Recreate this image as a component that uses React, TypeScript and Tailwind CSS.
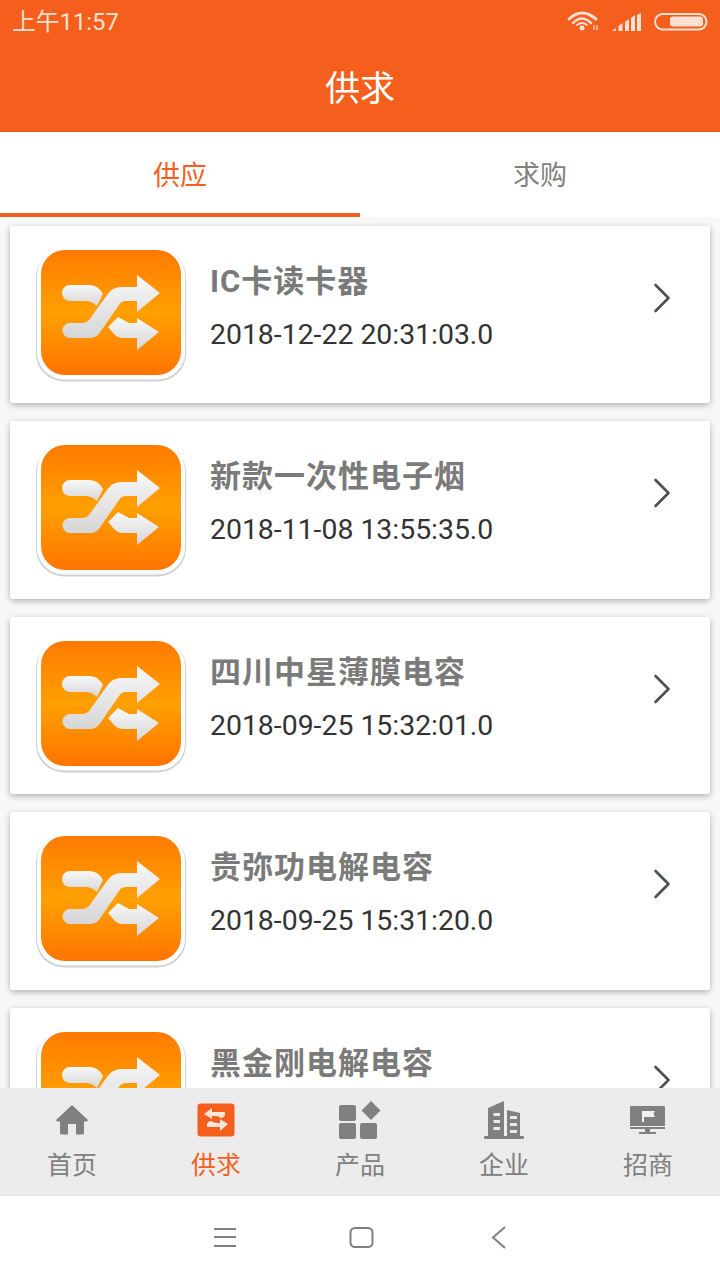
import { ChevronRight } from 'lucide-react'

const CJK = "font-['Roboto','Noto_Sans_CJK_SC',sans-serif]"

const items = [
  { title: 'IC卡读卡器', date: '2018-12-22 20:31:03.0' },
  { title: '新款一次性电子烟', date: '2018-11-08 13:55:35.0' },
  { title: '四川中星薄膜电容', date: '2018-09-25 15:32:01.0' },
  { title: '贵弥功电解电容', date: '2018-09-25 15:31:20.0' },
  { title: '黑金刚电解电容', date: '2018-09-25 15:30:42.0' },
]

function ShuffleTile({ id }: { id: number }) {
  return (
    <svg width="150" height="134" viewBox="0 0 150 134" className="shrink-0">
      <defs>
        <linearGradient id={`tile-${id}`} x1="0" y1="0" x2="0" y2="1">
          <stop offset="0" stopColor="#ff7a00" />
          <stop offset="0.5" stopColor="#ffa000" />
          <stop offset="1" stopColor="#ff7400" />
        </linearGradient>
        <linearGradient id={`arrow-${id}`} x1="0" y1="0" x2="0" y2="1">
          <stop offset="0" stopColor="#f8f8f8" />
          <stop offset="1" stopColor="#d6d6d6" />
        </linearGradient>
      </defs>
      <rect x="0" y="1" width="150" height="132.500" rx="28" fill="#d0d0d0" />
      <rect x="1" y="0.500" width="148" height="131" rx="27" fill="#fff" />
      <rect x="5" y="2" width="140" height="125" rx="24" fill={`url(#tile-${id})`} />
      <g fill={`url(#arrow-${id})`}>
        <path d="M34 37h18c6 0 10 2 13 6l2 3-6 12-4-3c-2-1-4-2-7-2H34a8 8 0 010-16z" />
        <path d="M34 75h12c3 0 5-1 7-3l18-25c4-6 9-8 15-8h15V27l23 18-23 19V53H90c-3 0-5 1-7 4L65 83c-3 5-7 7-11 7H34a7.500 7.500 0 010-15z" />
        <path d="M82 69l11 6h8V70l22 14-22 18V90H87c-4 0-7-2-9-4l-6-7z" />
      </g>
    </svg>
  )
}

function ItemCard({ item, id }: { item: (typeof items)[number]; id: number }) {
  return (
    <div className="mx-[10px] flex h-[177.670px] shrink-0 items-start rounded-[3px] bg-white pl-[26px] pt-[22px] shadow-[0_2px_6px_rgba(0,0,0,0.3)]">
      <ShuffleTile id={id} />
      <div className="ml-[24px] w-[420px] pt-[14px]">
        <div className={`text-[31px] leading-[40px] font-bold text-[#7a7a7a] tracking-[1px] ${CJK}`}>{item.title}</div>
        <div className="mt-[13px] font-['Roboto',sans-serif] text-[28.400px] leading-[40px] text-[#333]">{item.date}</div>
      </div>
      <ChevronRight className="mt-[24px] ml-[6px] shrink-0 text-[#4a5058]" size={52} strokeWidth={1.200} />
    </div>
  )
}

function NavItem({ label, active, children }: { label: string; active?: boolean; children: React.ReactNode }) {
  return (
    <div className="flex flex-1 flex-col items-center">
      <div className="flex h-[44px] w-[50px] items-center justify-center">{children}</div>
      <div className={`mt-[7px] text-[25px] leading-[34px] ${CJK} ${active ? 'text-[#f55f1d]' : 'text-[#808080]'}`}>{label}</div>
    </div>
  )
}

export default function App() {
  return (
    <div className="flex h-[1280px] w-[720px] flex-col overflow-hidden bg-white">
      <header className="h-[132px] shrink-0 border-b border-[#f0550f] bg-[#f55f1d] text-white">
        <div className="flex h-[44px] items-center justify-between pl-[12px] pr-[6px]">
          <span className={`text-[23.800px] leading-[44px] text-[#fde0d2] ${CJK}`}>上午11:57</span>
          <svg width="154" height="44" viewBox="560 0 154 44" fill="none" stroke="#fde0d2">
            <path d="M569 19Q582 7 596 19" strokeWidth="3" strokeLinecap="round" />
            <path d="M573 23Q582 14 591 23" strokeWidth="2.500" strokeLinecap="round" />
            <path d="M577 25Q582 21 587 25" strokeWidth="2" strokeLinecap="round" />
            <circle cx="582" cy="28" r="2.500" fill="#fde0d2" stroke="none" />
            <path d="M594 25v5M597 25v5" strokeWidth="1.200" />
            <path
              d="M612 31l4-3v3zM618.500 31v-5l4-3v8zM625 31v-9l4-3v12zM631 31v-13l4-3v16zM637 31v-16l4-2v18z"
              fill="#fde0d2"
              stroke="none"
            />
            <rect x="655" y="14" width="51.500" height="15.500" rx="7.750" strokeWidth="2" />
            <rect x="670" y="16.500" width="33" height="10" rx="3" fill="#fde0d2" stroke="none" />
          </svg>
        </div>
        <div className={`flex h-[87px] items-center justify-center pt-[6px] text-[35px] ${CJK}`}>供求</div>
      </header>

      <nav className="flex h-[85px] shrink-0 bg-white">
        <div className={`flex flex-1 items-center justify-center border-b-[4px] border-[#f55f1d] pt-[8px] text-[27px] text-[#f55f1d] ${CJK}`}>供应</div>
        <div className={`flex flex-1 items-center justify-center border-b-[4px] border-transparent pt-[8px] text-[27px] text-[#808080] ${CJK}`}>求购</div>
      </nav>

      <main className="flex min-h-0 flex-1 flex-col gap-[18px] overflow-hidden bg-[#f8f8f8] pt-[8.500px]">
        {items.map((item, i) => (
          <ItemCard key={item.title} item={item} id={i} />
        ))}
      </main>

      <footer className="flex h-[108px] shrink-0 border-b border-[#e2e2e2] bg-[#ececec] pt-[10px]">
        <NavItem label="首页">
          <svg width="34" height="30" viewBox="0 0 34 30" fill="#808080">
            <path d="M17 0L33 15l-1 1.500H29V28a1.500 1.500 0 01-1.500 1.500H21V19h-8v10.500H6.500A1.500 1.500 0 015 28V16.500H2L1 15z" />
          </svg>
        </NavItem>
        <NavItem label="供求" active>
          <svg width="38" height="34" viewBox="0 0 38 34">
            <rect width="37" height="33" x="0.500" y="0.500" rx="3" fill="#f55f1d" />
            <path d="M7 11l8-6v4h13v3c-1 2-2 3-4 3-3-2-6-2-9-2v3z" fill="#fde6da" />
            <path d="M31 21l-8 7v-4H10v-3c1-2 2-3 4-3 3 2 6 2 9 2v-4z" fill="#fde6da" />
          </svg>
        </NavItem>
        <NavItem label="产品">
          <svg width="42" height="38" viewBox="0 0 42 38" fill="#808080">
            <rect x="0" y="4" width="17" height="16" rx="2" />
            <rect x="0" y="22" width="17" height="16" rx="2" />
            <rect x="21" y="22" width="17" height="16" rx="2" />
            <path d="M32 0l9.500 9.500L32 19l-9.500-9.500z" />
          </svg>
        </NavItem>
        <NavItem label="企业">
          <svg width="40" height="38" viewBox="0 0 40 38">
            <g fill="#808080">
              <path d="M4 36V7L20 0v36z" />
              <path d="M23 9l13 3v24H23z" />
              <rect x="0" y="35" width="40" height="3" rx="1" />
            </g>
            <g fill="#ececec">
              <rect x="9.500" y="12" width="6.500" height="3" />
              <rect x="9.500" y="19" width="6.500" height="3" />
              <rect x="9.500" y="26" width="6.500" height="3" />
              <rect x="26" y="15" width="7" height="3" />
              <rect x="26" y="22" width="7" height="3" />
              <rect x="26" y="29" width="7" height="3" />
            </g>
          </svg>
        </NavItem>
        <NavItem label="招商">
          <svg width="36" height="28" viewBox="0 0 36 28" fill="#808080">
            <path d="M1 0h33a1 1 0 011 1v19H0V1a1 1 0 011-1z" />
            <rect x="0" y="21" width="35" height="2" />
            <rect x="15" y="23" width="5" height="3" />
            <rect x="9" y="26" width="17" height="2" />
            <path d="M12 5h2v11h-2zM14 5h11l-1.500 2.500L25 11H14z" fill="#f0f0f0" />
          </svg>
        </NavItem>
      </footer>

      <div className="h-[84px] shrink-0 bg-white">
        <svg width="720" height="84" viewBox="0 0 720 84" fill="none" stroke="#808080" strokeWidth="2">
          <path d="M214 33h22M214 41h22M214 50h22" />
          <rect x="350.500" y="32" width="22" height="19" rx="4.500" />
          <path d="M505 31l-12 10.500 12 10.500" />
        </svg>
      </div>
    </div>
  )
}
